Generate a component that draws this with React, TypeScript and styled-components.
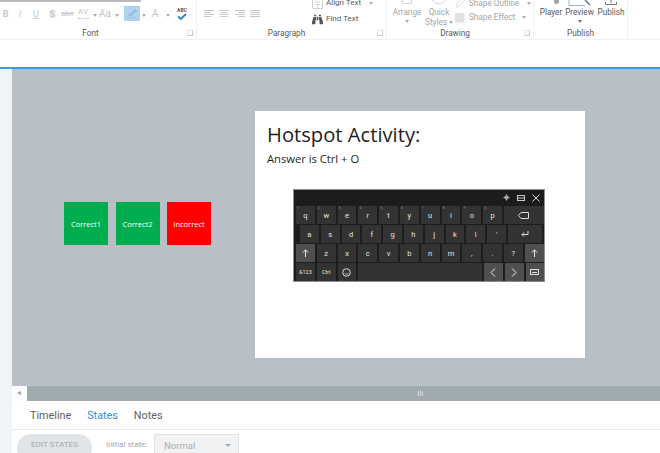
import * as React from 'react';
import styled, { createGlobalStyle } from 'styled-components';
import { FaBinoculars } from 'react-icons/fa';

const GlobalStyle = createGlobalStyle`
  html, body {
    margin: 0;
    padding: 0;
    background: #fff;
    overflow: hidden;
  }
  * {
    box-sizing: border-box;
  }
`;

const UI_FONT = `Roboto, "Noto Sans", sans-serif`;
const SLIDE_FONT = `"Open Sans", "Noto Sans", sans-serif`;

const AlignIcon = ({ kind }: { kind: 'left' | 'center' | 'right' | 'justify' }) => {
  const short = kind === 'justify' ? 10 : 7;
  const start = kind === 'center' ? 1.5 : kind === 'right' ? 3 : 0;
  return (
    <svg width="10" height="7" viewBox="0 0 10 7">
      {[0, 1, 2, 3].map((i) => (
        <rect
          key={i}
          x={i % 2 ? start : 0}
          y={i * 2}
          width={i % 2 ? short : 10}
          height="1"
          fill="#c4c8cb"
        />
      ))}
    </svg>
  );
};

const ShiftArrow = () => (
  <svg width="7" height="8" viewBox="0 0 7 8">
    <path d="M3.5 8 V1 M.8 3.6 L3.5 .8 L6.2 3.6" fill="none" stroke="#e8e8e8" />
  </svg>
);

const Ribbon = () => (
  <RibbonBar>
    <Group $width={197}>
      <TopRule />
      <FontTools>
        <Glyph $w={11} $bold>B</Glyph>
        <Glyph $w={18} $italic>I</Glyph>
        <Glyph $w={14} $under>U</Glyph>
        <Glyph $w={18} $bold $shadow>S</Glyph>
        <Glyph $w={13} $size={8} $strike>abc</Glyph>
        <Spacing>
          AV
          <svg width="11" height="3" viewBox="0 0 11 3">
            <path d="M0 1.5 H11 M1.5 0 L0 1.5 L1.5 3 M9.5 0 L11 1.5 L9.5 3" stroke="#c3c7ca" strokeWidth=".6" fill="none" />
          </svg>
        </Spacing>
        <CaretMark $gap={0.5} />
        <Glyph $w={17} $size={10}>Aa</Glyph>
        <CaretMark $gap={1} />
        <Highlight>
          <svg width="12" height="11" viewBox="0 0 12 11">
            <path d="M2 7 L9 1 L11 3 L4 9 Z" fill="#9dbdd4" />
            <path d="M1 10 H11" stroke="#a6c6dc" strokeWidth="1" />
          </svg>
        </Highlight>
        <CaretMark $gap={1.5} />
        <Glyph $w={19} $size={11}>A</Glyph>
        <CaretMark $gap={1} />
        <Spell>
          <SpellText>ABC</SpellText>
          <svg width="10" height="7" viewBox="0 0 10 7">
            <path d="M1 3.5 L3.8 6 L9 1" stroke="#2f7fc1" strokeWidth="1.8" fill="none" />
          </svg>
        </Spell>
      </FontTools>
      <GroupLabel $shift={15}>
        Font
        <Launcher />
      </GroupLabel>
    </Group>

    <Group $width={190}>
      <ParagraphTools>
        <AlignRow>
          <AlignIcon kind="left" />
          <AlignIcon kind="center" />
          <AlignIcon kind="right" />
          <AlignIcon kind="justify" />
        </AlignRow>
        <EditColumn>
          <EditRow>
            <svg width="11" height="11" viewBox="0 0 11 11">
              <path d="M.5 0 V10.5 H10.5 V0" fill="none" stroke="#cfd2d4" />
              <path d="M3 4 H8 M3 6.5 H8 M5.5 7 V10" stroke="#c0c4c7" strokeWidth=".8" />
            </svg>
            <ToolText>Align Text</ToolText>
            <CaretMark $gap={5} />
          </EditRow>
          <EditRow>
            <FaBinoculars size={11} color="#555" />
            <ToolText>Find Text</ToolText>
          </EditRow>
        </EditColumn>
      </ParagraphTools>
      <GroupLabel $shift={10}>
        Paragraph
        <Launcher />
      </GroupLabel>
    </Group>

    <Group $width={147}>
      <DrawingTools>
        <BigTool $w={28}>
          <IconSlot>
            <svg width="10" height="4" viewBox="0 0 10 4">
              <path d="M.5 0 V3.5 H9.5 V0" fill="none" stroke="#d4d7d9" />
            </svg>
          </IconSlot>
          <ToolMuted>Arrange</ToolMuted>
          <Drop />
        </BigTool>
        <BigTool $w={24}>
          <IconSlot>
            <svg width="16" height="5" viewBox="0 0 16 5">
              <path d="M1 0 Q8 8 15 0" fill="none" stroke="#d4d7d9" />
            </svg>
          </IconSlot>
          <ToolMuted>Quick</ToolMuted>
          <StylesLine>
            Styles
            <CaretMark $gap={2} />
          </StylesLine>
        </BigTool>
        <ShapeColumn>
          <ShapeRow>
            <svg width="10" height="10" viewBox="0 0 10 10">
              <path d="M1 9 L2 6 L8 0 L10 2 L4 8 Z" fill="none" stroke="#dcdfe1" />
            </svg>
            <ToolMuted>Shape Outline</ToolMuted>
            <CaretMark $gap={4} />
          </ShapeRow>
          <ShapeRow>
            <EffectIcon />
            <ToolMuted>Shape Effect</ToolMuted>
            <CaretMark $gap={3} />
          </ShapeRow>
        </ShapeColumn>
      </DrawingTools>
      <GroupLabel $shift={10}>
        Drawing
        <Launcher />
      </GroupLabel>
    </Group>

    <Group $width={94}>
      <PublishTools>
        <BigTool $w={20}>
          <IconSlot>
            <svg width="20" height="5" viewBox="0 0 20 5">
              <rect x="13" y="-3" width="5" height="7" rx="2.5" fill="#9ea3a6" />
            </svg>
          </IconSlot>
          <ToolDark>Player</ToolDark>
        </BigTool>
        <BigTool $w={27}>
          <IconSlot>
            <svg width="24" height="6" viewBox="0 0 24 6">
              <path d="M1 0 V5.5 H17" fill="none" stroke="#9db2c6" />
              <path d="M17 0 L22 5" stroke="#6f7578" strokeWidth="1.5" />
            </svg>
          </IconSlot>
          <ToolDark>Preview</ToolDark>
          <Drop $dark />
        </BigTool>
        <BigTool $w={26}>
          <IconSlot>
            <svg width="12" height="5" viewBox="0 0 12 5">
              <path d="M6 0 V3 M.5 2 V4.5 H11.5 V2" fill="none" stroke="#6f7578" />
            </svg>
          </IconSlot>
          <ToolDark>Publish</ToolDark>
        </BigTool>
      </PublishTools>
      <GroupLabel>Publish</GroupLabel>
    </Group>
  </RibbonBar>
);

const LETTER_ROWS = {
  one: ['q', 'w', 'e', 'r', 't', 'y', 'u', 'i', 'o', 'p'],
  two: ['a', 's', 'd', 'f', 'g', 'h', 'j', 'k', 'l', "'"],
  three: ['z', 'x', 'c', 'v', 'b', 'n', 'm', ',', '.', '?'],
};

const Keyboard = () => (
  <Board>
    <BoardTop>
      <svg width="7" height="7" viewBox="0 0 8 8">
        <path d="M4 0 L5.5 2.5 L8 4 L5.5 5.5 L4 8 L2.5 5.5 L0 4 L2.5 2.5 Z" fill="#a8a8a8" />
      </svg>
      <svg width="8" height="6" viewBox="0 0 8 6">
        <rect x="0.5" y="0.5" width="7" height="5" fill="none" stroke="#c8c8c8" />
        <rect x="0.5" y="2.5" width="7" height="1" fill="#c8c8c8" />
      </svg>
      <svg width="8" height="8" viewBox="0 0 8 8">
        <path d="M.5 .5 L7.5 7.5 M7.5 .5 L.5 7.5" stroke="#d8d8d8" strokeWidth="1" />
      </svg>
    </BoardTop>
    <KeyRow>
      {LETTER_ROWS.one.map((k, i) => (
        <Key key={k}>
          <KeyHint>{(i + 1) % 10}</KeyHint>
          {k}
        </Key>
      ))}
      <Key $w={40}>
        <svg width="11" height="7" viewBox="0 0 11 7">
          <path d="M3 .5 H10.5 V6.5 H3 L.5 3.5 Z" fill="none" stroke="#ddd" />
        </svg>
      </Key>
    </KeyRow>
    <KeyRow $indent={5}>
      {LETTER_ROWS.two.map((k) => (
        <Key key={k}>{k}</Key>
      ))}
      <Key $w={34}>
        <svg width="8" height="6" viewBox="0 0 8 6">
          <path d="M7 0 V3.5 H1 M3 1.5 L1 3.5 L3 5.5" fill="none" stroke="#ddd" />
        </svg>
      </Key>
    </KeyRow>
    <KeyRow>
      <Key $light>
        <ShiftArrow />
      </Key>
      {LETTER_ROWS.three.map((k) => (
        <Key key={k}>{k}</Key>
      ))}
      <Key $light>
        <ShiftArrow />
      </Key>
    </KeyRow>
    <KeyRow>
      <Key $small>&amp;123</Key>
      <Key $small>Ctrl</Key>
      <Key>
        <svg width="9" height="9" viewBox="0 0 9 9">
          <circle cx="4.5" cy="4.5" r="3.8" fill="none" stroke="#ddd" />
          <path d="M2.6 5.4 Q4.5 7.2 6.4 5.4" fill="none" stroke="#ddd" strokeWidth=".8" />
        </svg>
      </Key>
      <Key $w={123.6} />
      <Key $light>
        <svg width="6" height="9" viewBox="0 0 6 9">
          <path d="M5 .5 L1 4.5 L5 8.5" fill="none" stroke="#eee" />
        </svg>
      </Key>
      <Key $light>
        <svg width="6" height="9" viewBox="0 0 6 9">
          <path d="M1 .5 L5 4.5 L1 8.5" fill="none" stroke="#eee" />
        </svg>
      </Key>
      <Key $light>
        <svg width="9" height="6" viewBox="0 0 9 6">
          <rect x=".5" y=".5" width="8" height="5" fill="none" stroke="#ddd" />
          <path d="M2 3.5 H7" stroke="#ddd" />
        </svg>
      </Key>
    </KeyRow>
  </Board>
);

const App = () => (
  <>
    <GlobalStyle />
    <Page>
      <Ribbon />
      <Strip />
      <Main>
        <Sidebar />
        <Work>
          <Canvas>
            <Hotspots>
              <Hotspot>Correct1</Hotspot>
              <Hotspot>Correct2</Hotspot>
              <Hotspot $wrong>Incorrect</Hotspot>
            </Hotspots>
            <Slide>
              <Title>Hotspot Activity:</Title>
              <Answer>Answer is Ctrl + O</Answer>
              <Keyboard />
            </Slide>
          </Canvas>
          <Scrollbar>
            <ScrollButton />
            <Grip />
          </Scrollbar>
          <Tabs>
            <Tab>Timeline</Tab>
            <Tab $active>States</Tab>
            <Tab>Notes</Tab>
          </Tabs>
          <StatesBar>
            <EditButton>EDIT STATES</EditButton>
            <StateLabel>Initial state:</StateLabel>
            <StateSelect>
              Normal
              <SelectCaret />
            </StateSelect>
          </StatesBar>
        </Work>
      </Main>
    </Page>
  </>
);

const Page = styled.div`
  width: 660px;
  height: 453px;
  overflow: hidden;
  display: flex;
  flex-direction: column;
  font-family: ${UI_FONT};
  background: #fff;
`;

const RibbonBar = styled.div`
  height: 40px;
  flex: none;
  display: flex;
  background: #fff;
  border-bottom: 1px solid #eff1f2;
  overflow: hidden;
`;

const Group = styled.div<{ $width: number }>`
  position: relative;
  width: ${(p) => p.$width}px;
  flex: none;
  display: flex;
  flex-direction: column;
  border-right: 1px solid #eef0f1;
`;

const TopRule = styled.div`
  position: absolute;
  left: 0;
  top: 0;
  width: 141px;
  height: 2px;
  background: #b9b9b9;
`;

const GroupLabel = styled.div<{ $shift?: number }>`
  position: relative;
  height: 14px;
  flex: none;
  padding-right: ${(p) => p.$shift ?? 0}px;
  font-size: 8.2px;
  line-height: 16px;
  color: #55595c;
  text-align: center;
`;

const Launcher = styled.span`
  position: absolute;
  right: 3px;
  top: 5px;
  width: 6px;
  height: 6px;
  border: 1px solid #c9cccf;
  border-top-color: #e4e6e8;
  border-left-color: #e4e6e8;
`;

const FontTools = styled.div`
  height: 25px;
  flex: none;
  padding-top: 6px;
  display: flex;
  align-items: flex-start;
`;

const Glyph = styled.span<{
  $w: number;
  $size?: number;
  $bold?: boolean;
  $italic?: boolean;
  $under?: boolean;
  $strike?: boolean;
  $shadow?: boolean;
}>`
  width: ${(p) => p.$w}px;
  flex: none;
  height: 16px;
  font-size: ${(p) => p.$size ?? 9}px;
  line-height: 16px;
  font-weight: ${(p) => (p.$bold ? 700 : 400)};
  font-style: ${(p) => (p.$italic ? 'italic' : 'normal')};
  text-decoration: ${(p) => (p.$under ? 'underline' : p.$strike ? 'line-through' : 'none')};
  text-shadow: ${(p) => (p.$shadow ? '1px 1px 1px #d8dadc' : 'none')};
  color: #c3c7ca;
  text-align: center;
`;

const Spacing = styled.span`
  width: 18px;
  height: 16px;
  flex: none;
  display: flex;
  flex-direction: column;
  align-items: center;
  font-size: 8px;
  line-height: 11px;
  color: #c3c7ca;
`;

const CaretMark = styled.span<{ $gap?: number }>`
  display: inline-block;
  flex: none;
  width: 0;
  height: 0;
  align-self: center;
  margin-left: ${(p) => p.$gap ?? 0}px;
  border-left: 2.5px solid transparent;
  border-right: 2.5px solid transparent;
  border-top: 3px solid #a8adb0;
`;

const Drop = styled.span<{ $dark?: boolean }>`
  width: 0;
  height: 0;
  margin-top: 3px;
  border-left: 2.5px solid transparent;
  border-right: 2.5px solid transparent;
  border-top: 3px solid ${(p) => (p.$dark ? '#6f7578' : '#a8adb0')};
`;

const Highlight = styled.span`
  width: 16px;
  height: 15px;
  margin-left: 5.5px;
  flex: none;
  background: #aed3ec;
  display: flex;
  align-items: center;
  justify-content: center;
`;

const Spell = styled.span`
  width: 10px;
  margin-left: 7.5px;
  margin-top: 1px;
  flex: none;
  display: flex;
  flex-direction: column;
  align-items: center;
`;

const SpellText = styled.span`
  font-size: 5px;
  line-height: 6px;
  font-weight: 700;
  color: #555;
`;

const ParagraphTools = styled.div`
  height: 25px;
  flex: none;
  display: flex;
  padding-left: 7px;
`;

const AlignRow = styled.div`
  width: 108px;
  height: 7px;
  flex: none;
  margin-top: 10px;
  display: flex;
  gap: 5.3px;
`;

const EditColumn = styled.div`
  display: flex;
  flex-direction: column;
  gap: 4px;
  margin-top: -3px;
`;

const EditRow = styled.div`
  height: 12px;
  flex: none;
  display: flex;
  align-items: center;
  gap: 3px;
`;

const ToolText = styled.span`
  font-size: 8px;
  line-height: 12px;
  color: #55595c;
  white-space: nowrap;
`;

const DrawingTools = styled.div`
  height: 25px;
  flex: none;
  display: flex;
  align-items: flex-start;
  padding-left: 6px;
  gap: 6px;
`;

const BigTool = styled.div<{ $w: number }>`
  width: ${(p) => p.$w}px;
  flex: none;
  display: flex;
  flex-direction: column;
  align-items: center;
`;

const IconSlot = styled.div`
  height: 7px;
  flex: none;
  display: flex;
  align-items: flex-start;
  justify-content: center;
  overflow: hidden;
`;

const ToolMuted = styled.span`
  font-size: 8.2px;
  line-height: 10px;
  color: #a2a6a9;
  white-space: nowrap;
`;

const ToolDark = styled(ToolMuted)`
  color: #55595c;
`;

const StylesLine = styled(ToolMuted)`
  display: flex;
  align-items: center;
`;

const ShapeColumn = styled.div`
  margin: -2px 0 0 -2px;
  display: flex;
  flex-direction: column;
  gap: 4px;
`;

const ShapeRow = styled.div`
  height: 10px;
  flex: none;
  display: flex;
  align-items: center;
  gap: 4px;
  white-space: nowrap;
`;

const EffectIcon = styled.span`
  width: 9px;
  height: 9px;
  flex: none;
  margin-right: 1px;
  background: #dfe1e3;
  box-shadow: 1px 1px 2px #e6e8ea;
`;

const PublishTools = styled.div`
  height: 25px;
  flex: none;
  display: flex;
  align-items: flex-start;
  padding-left: 7px;
  gap: 5px;
`;

const Strip = styled.div`
  height: 29px;
  flex: none;
  background: #fff;
  border-bottom: 2px solid #3a9be0;
`;

const Main = styled.div`
  flex: 1;
  min-height: 0;
  display: flex;
`;

const Sidebar = styled.div`
  width: 12px;
  flex: none;
  background: #f1f4f7;
`;

const Work = styled.div`
  flex: 1;
  min-width: 0;
  display: flex;
  flex-direction: column;
`;

const Canvas = styled.div`
  height: 317px;
  flex: none;
  background: #b8bfc6;
  padding: 42px 0 0 52px;
  display: flex;
  align-items: flex-start;
`;

const Hotspots = styled.div`
  margin-top: 91px;
  display: flex;
  gap: 7.5px;
`;

const Hotspot = styled.div<{ $wrong?: boolean }>`
  width: 44px;
  height: 43px;
  display: flex;
  align-items: center;
  justify-content: center;
  font-family: ${SLIDE_FONT};
  font-size: 7.5px;
  color: #fff;
  background: ${(p) => (p.$wrong ? '#ff0000' : '#00ae50')};
`;

const Slide = styled.div`
  width: 330px;
  height: 247px;
  flex: none;
  margin-left: 44px;
  padding: 9px 12px 0;
  background: #fff;
  color: #1e1e1e;
  font-family: ${SLIDE_FONT};
`;

const Title = styled.div`
  font-size: 20.2px;
  line-height: 28px;
`;

const Answer = styled.div`
  margin-top: 3px;
  font-size: 11.2px;
  line-height: 16px;
`;

const Board = styled.div`
  width: 252px;
  height: 93px;
  margin: 22px 0 0 26px;
  padding: 0 1px;
  background: #1c1c1c;
  border: 1px solid #8c8c8c;
  display: flex;
  flex-direction: column;
  gap: 1px;
`;

const BoardTop = styled.div`
  height: 15px;
  flex: none;
  display: flex;
  align-items: center;
  justify-content: flex-end;
  gap: 7px;
  padding-right: 3px;
`;

const KeyRow = styled.div<{ $indent?: number }>`
  display: flex;
  gap: 2px;
  padding-left: ${(p) => p.$indent ?? 1}px;
`;

const Key = styled.div<{ $w?: number; $light?: boolean; $small?: boolean }>`
  position: relative;
  width: ${(p) => p.$w ?? 18.8}px;
  height: 18px;
  flex: none;
  display: flex;
  align-items: center;
  justify-content: center;
  background: ${(p) => (p.$light ? '#4f4f4f' : '#333333')};
  color: #e4e4e4;
  font-family: ${UI_FONT};
  font-size: ${(p) => (p.$small ? 5.5 : 7.5)}px;
`;

const KeyHint = styled.span`
  position: absolute;
  left: 1px;
  top: 0;
  font-size: 3.5px;
  line-height: 5px;
  color: #8a8a8a;
`;

const Scrollbar = styled.div`
  height: 15px;
  flex: none;
  display: flex;
  align-items: center;
  background: #9fabaf;
`;

const ScrollButton = styled.div`
  width: 15px;
  height: 15px;
  flex: none;
  background: #fdfdfd;
  position: relative;
  &::after {
    content: '';
    position: absolute;
    left: 5px;
    top: 5px;
    border-top: 2.5px solid transparent;
    border-bottom: 2.5px solid transparent;
    border-right: 4px solid #9aa0a4;
  }
`;

const Grip = styled.div`
  width: 6px;
  height: 5px;
  margin-left: 391px;
  background: repeating-linear-gradient(90deg, #d6dadc 0 1px, transparent 1px 2px);
`;

const Tabs = styled.div`
  height: 29px;
  flex: none;
  display: flex;
  align-items: center;
  gap: 16px;
  padding-left: 18px;
  border-bottom: 1px solid #ebeced;
`;

const Tab = styled.span<{ $active?: boolean }>`
  font-size: 10.8px;
  color: ${(p) => (p.$active ? '#2f8fdc' : '#5b5f62')};
`;

const StatesBar = styled.div`
  flex: 1;
  display: flex;
  align-items: flex-start;
  padding: 4px 0 0 5px;
  overflow: hidden;
`;

const EditButton = styled.div`
  width: 75px;
  height: 28px;
  flex: none;
  border-radius: 14px;
  background: #e2e5e8;
  color: #aeb3b7;
  font-size: 8px;
  font-weight: 500;
  line-height: 22px;
  text-align: center;
`;

const StateLabel = styled.span`
  margin-left: 14px;
  width: 48px;
  flex: none;
  font-size: 8px;
  line-height: 22px;
  color: #a4a8ab;
  white-space: nowrap;
`;

const StateSelect = styled.div`
  position: relative;
  width: 85px;
  height: 28px;
  flex: none;
  padding-left: 9px;
  background: #f1f2f3;
  border: 1px solid #dfe1e3;
  color: #a9adb0;
  font-size: 9.5px;
  line-height: 21px;
`;

const SelectCaret = styled.span`
  position: absolute;
  right: 7px;
  top: 9px;
  border-left: 3px solid transparent;
  border-right: 3px solid transparent;
  border-top: 3.5px solid #a2a6a9;
`;

export default App;
